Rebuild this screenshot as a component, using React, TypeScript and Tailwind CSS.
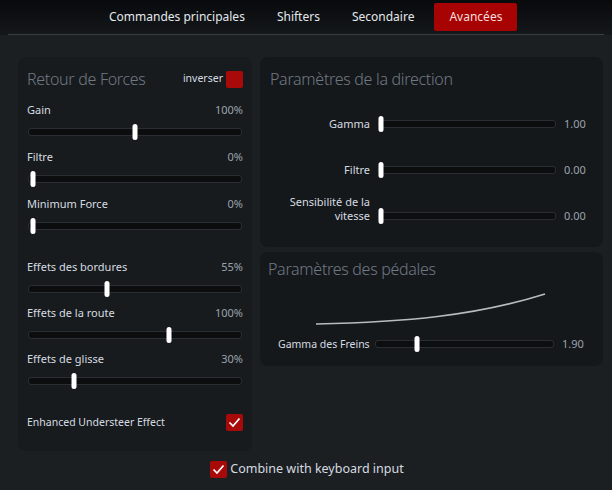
import { FC } from "react";

const font = { fontFamily: '"Noto Sans", "Open Sans", sans-serif' };

const Thumb: FC<{ pct: number }> = ({ pct }) => (
  <div
    className="absolute top-1/2 h-[16px] w-[5px] -translate-x-1/2 -translate-y-1/2 rounded-full bg-white"
    style={{ left: `${pct}%` }}
  />
);

const Track: FC<{ pct: number; className?: string }> = ({ pct, className }) => (
  <div className={`relative h-[8px] rounded-[3px] border border-[#2a2e32] bg-[#0b0d0f] ${className ?? ""}`}>
    <Thumb pct={pct} />
  </div>
);

const Slider: FC<{ label: string; value: string; pct: number }> = ({ label, value, pct }) => (
  <div className="flex flex-col">
    <div className="flex items-center justify-between text-[11px] leading-[14px]">
      <span className="text-[#d6dbe0]">{label}</span>
      <span className="text-[#9aa3ab]">{value}</span>
    </div>
    <Track pct={pct} className="mx-[1px] mt-[11px]" />
  </div>
);

const RowSlider: FC<{ label: React.ReactNode; value: string; pct: number }> = ({ label, value, pct }) => (
  <div className="flex h-[28px] items-end">
    <div className="w-[108px] pr-[8px] text-right text-[11px] leading-[14px] text-[#d6dbe0]">{label}</div>
    <Track pct={pct} className="mb-[3px] w-[178px]" />
    <span className="ml-[8px] text-[11px] leading-[14px] text-[#9aa3ab]">{value}</span>
  </div>
);

const Check: FC = () => (
  <div className="flex h-[17px] w-[17px] items-center justify-center rounded-[2px] bg-[#a80a0a]">
    <svg width="13" height="11" viewBox="0 0 13 11" fill="none">
      <path d="M1.5 5.5 L5 9 L11.5 1.5" stroke="white" strokeWidth="1.7" />
    </svg>
  </div>
);

const App: FC = () => {
  return (
    <div className="flex h-[490px] w-[612px] flex-col bg-[#1b1f22]" style={font}>
      <div className="bg-gradient-to-b from-[#080a0c] to-[#15181b] px-[8px]">
        <div className="flex h-[35px] items-center border-b border-[#3a3e42] pl-[85px] text-[12px]">
          <div className="px-[16px] text-[#e4e8ec]">Commandes principales</div>
          <div className="px-[16px] text-[#e4e8ec]">Shifters</div>
          <div className="px-[16px] text-[#e4e8ec]">Secondaire</div>
          <div className="ml-[4px] flex h-[28px] items-center rounded-[2px] bg-[#a80303] px-[15px] text-[#f4dede]">
            Avancées
          </div>
        </div>
      </div>

      <div className="mt-[22px] flex gap-[8px] pl-[18px] pr-[9px]">
        <div className="flex h-[394px] w-[234px] flex-col rounded-[8px] bg-[#181b1e] px-[9px] pt-[10px]">
          <div className="flex items-center justify-between">
            <span className="text-[16px] font-light leading-[24px] tracking-[-0.3px] text-[#6f7983]">
              Retour de Forces
            </span>
            <div className="flex items-center gap-[3px]">
              <span className="text-[10.5px] text-[#d6dbe0]">inverser</span>
              <div className="h-[17px] w-[17px] rounded-[2px] bg-[#a80a0a]" />
            </div>
          </div>
          <div className="mt-[12px] flex flex-col gap-[14px]">
            <Slider label="Gain" value="100%" pct={50} />
            <Slider label="Filtre" value="0%" pct={2} />
            <Slider label="Minimum Force" value="0%" pct={2} />
          </div>
          <div className="mt-[30px] flex flex-col gap-[13px]">
            <Slider label="Effets des bordures" value="55%" pct={37} />
            <Slider label="Effets de la route" value="100%" pct={66} />
            <Slider label="Effets de glisse" value="30%" pct={21} />
          </div>
          <div className="mt-[29px] flex items-center justify-between">
            <span className="text-[10.5px] text-[#d6dbe0]">Enhanced Understeer Effect</span>
            <Check />
          </div>
        </div>

        <div className="flex flex-1 flex-col gap-[5px]">
          <div className="h-[190px] rounded-[8px] bg-[#15181b] px-[10px] pt-[10px]">
            <div className="text-[16px] font-light leading-[24px] tracking-[-0.3px] text-[#6f7983]">
              Paramètres de la direction
            </div>
            <div className="mt-[12px] flex flex-col gap-[18px]">
              <RowSlider label="Gamma" value="1.00" pct={1} />
              <RowSlider label="Filtre" value="0.00" pct={1} />
              <RowSlider
                label={
                  <>
                    Sensibilité de la
                    <br />
                    vitesse
                  </>
                }
                value="0.00"
                pct={1}
              />
            </div>
          </div>

          <div className="h-[114px] rounded-[8px] bg-[#15181b] px-[8px] pt-[5px]">
            <div className="text-[16px] font-light leading-[24px] tracking-[-0.3px] text-[#6f7983]">
              Paramètres des pédales
            </div>
            <svg width="240" height="38" viewBox="0 0 240 38" className="ml-[47px] mt-[7px]" fill="none">
              <path d="M1 36 C 90 34, 160 28, 230 6" stroke="#b8bcc0" strokeWidth="1.6" />
            </svg>
            <div className="mt-[11px] flex items-center pl-[10px]">
              <span className="w-[97px] text-[10.5px] leading-[14px] text-[#d6dbe0]">Gamma des Freins</span>
              <Track pct={23} className="w-[179px]" />
              <span className="ml-[8px] text-[11px] leading-[14px] text-[#9aa3ab]">1.90</span>
            </div>
          </div>
        </div>
      </div>

      <div className="mt-[9px] flex items-center justify-center gap-[3px] pl-[2px]">
        <Check />
        <span className="text-[12.5px] text-[#d6dbe0]">Combine with keyboard input</span>
      </div>
    </div>
  );
};

export default App;
